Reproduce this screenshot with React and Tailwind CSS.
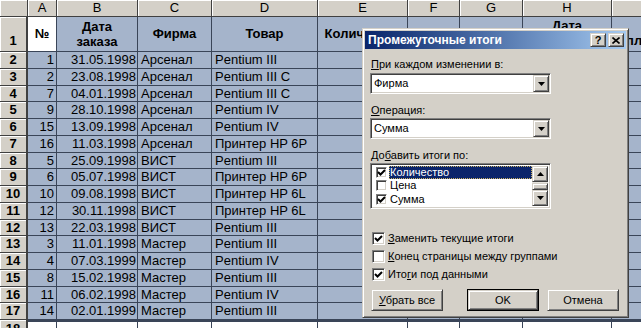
import React from 'react';

const rows = [
  [1, '31.05.1998', 'Арсенал', 'Pentium III'],
  [2, '23.08.1998', 'Арсенал', 'Pentium III C'],
  [7, '04.01.1998', 'Арсенал', 'Pentium III C'],
  [9, '28.10.1998', 'Арсенал', 'Pentium IV'],
  [15, '13.09.1998', 'Арсенал', 'Pentium IV'],
  [16, '11.03.1998', 'Арсенал', 'Принтер HP 6P'],
  [5, '25.09.1998', 'ВИСТ', 'Pentium III'],
  [6, '05.07.1998', 'ВИСТ', 'Принтер HP 6P'],
  [10, '09.08.1998', 'ВИСТ', 'Принтер HP 6L'],
  [12, '30.11.1998', 'ВИСТ', 'Принтер HP 6L'],
  [13, '22.03.1998', 'ВИСТ', 'Pentium III'],
  [3, '11.01.1998', 'Мастер', 'Pentium III'],
  [4, '07.03.1999', 'Мастер', 'Pentium IV'],
  [8, '15.02.1998', 'Мастер', 'Pentium III'],
  [11, '06.02.1998', 'Мастер', 'Pentium IV'],
  [14, '02.01.1999', 'Мастер', 'Pentium III'],
];

const letters = ['A', 'B', 'C', 'D', 'E', 'F', 'G', 'H', 'I'];

const head = 'bg-[#d4d0c8] border-r border-b border-[#404040] shadow-[inset_1px_1px_0_#fff] flex items-center justify-center';
const rowHead = 'bg-[#d4d0c8] border-r-2 border-b border-[#404040] shadow-[inset_1px_1px_0_#fff] flex items-center justify-center font-bold';
const cell = 'bg-[#a5b4cb] border-r border-b border-[#3a4558] flex items-center whitespace-nowrap overflow-hidden';
const blank = 'bg-white border-r border-b border-[#3a4558]';

const raised = 'bg-[#d4d0c8] border border-t-[#d4d0c8] border-l-[#d4d0c8] border-r-[#404040] border-b-[#404040] shadow-[inset_1px_1px_0_#fff,inset_-1px_-1px_0_#808080]';
const sunken = 'border border-t-[#808080] border-l-[#808080] border-r-white border-b-white shadow-[inset_1px_1px_0_#404040,inset_-1px_-1px_0_#d4d0c8]';

const Check = () => (
  <svg width="9" height="9" viewBox="0 0 9 9">
    <path d="M1 4 L3.5 6.5 L8 2" stroke="#000" strokeWidth="2" fill="none" />
  </svg>
);

const Box = ({ checked, size = 'w-[13px] h-[13px]' }) => (
  <span className={`${size} ${sunken} bg-white flex items-center justify-center shrink-0`}>
    {checked && <Check />}
  </span>
);

const Arrow = ({ up }) => (
  <svg width="7" height="4" viewBox="0 0 7 4">
    <path d={up ? 'M0 4 L3.5 0 L7 4 Z' : 'M0 0 L7 0 L3.5 4 Z'} fill="#000" />
  </svg>
);

const Combo = ({ value }) => (
  <div className={`w-[181px] h-[21px] bg-white ${sunken} flex items-center pl-[3px] pr-[1px]`}>
    <span className="flex-1">{value}</span>
    <span className={`w-[16px] h-[17px] ${raised} flex items-center justify-center`}>
      <Arrow />
    </span>
  </div>
);

const CheckRow = ({ checked, children }) => (
  <div className="h-[18px] flex items-center gap-[3px] pl-[2px]">
    <Box checked={checked} />
    <span>{children}</span>
  </div>
);

const Dialog = () => (
  <div className={`absolute left-[362px] top-[28px] w-[267px] h-[290px] ${raised} p-[2px] font-['Liberation_Sans',sans-serif] text-[11px] leading-[13px] text-black`}>
    <div className="h-[18px] flex items-center justify-between pl-[3px] pr-[2px] bg-linear-to-r from-[#0a246a] to-[#a6caf0]">
      <span className="text-white font-bold text-[12px]">Промежуточные итоги</span>
      <div className="flex gap-[2px]">
        <span className={`w-[16px] h-[14px] ${raised} flex items-center justify-center font-bold text-[11px]`}>?</span>
        <span className={`w-[16px] h-[14px] ${raised} flex items-center justify-center`}>
          <svg width="8" height="7" viewBox="0 0 8 7">
            <path d="M0.5 0.5 L7.5 6.5 M7.5 0.5 L0.5 6.5" stroke="#000" strokeWidth="1.6" />
          </svg>
        </span>
      </div>
    </div>

    <div className="px-[5px]">
      <div className="mt-[9px] pl-[1px]"><u>П</u>ри каждом изменении в:</div>
      <div className="mt-[2px]"><Combo value="Фирма" /></div>

      <div className="mt-[10px] pl-[1px]"><u>О</u>перация:</div>
      <div className="mt-[1px]"><Combo value="Сумма" /></div>

      <div className="mt-[10px] pl-[1px]">До<u>б</u>авить итоги по:</div>
      <div className={`mt-[1px] w-[181px] h-[46px] bg-white ${sunken} p-[2px] flex`}>
        <div className="flex-1 flex flex-col">
          <div className="h-[14px] flex items-center">
            <span className="w-[16px] flex justify-center"><Box checked size="w-[11px] h-[11px]" /></span>
            <span className="flex-1 h-full bg-[#0a246a] text-white pl-[1px] flex items-center outline outline-dotted outline-[#c8b060] -outline-offset-1">Количество</span>
          </div>
          <div className="h-[14px] flex items-center">
            <span className="w-[16px] flex justify-center"><Box size="w-[11px] h-[11px]" /></span>
            <span className="pl-[1px]">Цена</span>
          </div>
          <div className="h-[14px] flex items-center">
            <span className="w-[16px] flex justify-center"><Box checked size="w-[11px] h-[11px]" /></span>
            <span className="pl-[1px]">Сумма</span>
          </div>
        </div>
        <div className="w-[16px] flex flex-col bg-[#e6e4df]">
          <span className={`h-[16px] ${raised} flex items-center justify-center`}><Arrow up /></span>
          <span className={`mt-[1px] h-[8px] ${raised}`} />
          <span className="flex-1" />
          <span className={`h-[16px] ${raised} flex items-center justify-center`}><Arrow /></span>
        </div>
      </div>

      <div className="mt-[20px]">
        <CheckRow checked><u>З</u>аменить текущие итоги</CheckRow>
        <CheckRow><u>К</u>онец страницы между группами</CheckRow>
        <CheckRow checked>Ито<u>г</u>и под данными</CheckRow>
      </div>

      <div className="mt-[6px] flex">
        <span className={`ml-[1px] w-[72px] h-[22px] ${raised} flex items-center justify-center`}><span><u>У</u>брать все</span></span>
        <span className="ml-[24px] w-[72px] h-[22px] border border-black flex">
          <span className={`flex-1 ${raised} flex items-center justify-center`}>OK</span>
        </span>
        <span className={`ml-[8px] w-[72px] h-[22px] ${raised} flex items-center justify-center`}>Отмена</span>
      </div>
    </div>
  </div>
);

export default function App() {
  return (
    <div className="relative w-[641px] h-[328px] overflow-hidden bg-white font-['Liberation_Sans',Arial,sans-serif] text-[13px] leading-[16px] text-black">
      <div className="grid grid-cols-[28px_29px_81px_74px_106px_90px_52px_63px_89px_100px] grid-rows-[17px_35px_17px_17px_16px_17px_17px_17px_16px_17px_17px_17px_16px_17px_17px_17px_16px_17px_20px] w-[712px]">
        <div className={head} />
        {letters.map((l) => (
          <div key={l} className={head}>{l}</div>
        ))}

        <div className={`${rowHead} items-end pb-[2px]`}>1</div>
        <div className="bg-white border-r border-b border-[#3a4558] flex items-center justify-center font-bold">№</div>
        <div className={`${cell} justify-center text-center font-bold leading-[15px]`}>Дата<br />заказа</div>
        <div className={`${cell} justify-center font-bold`}>Фирма</div>
        <div className={`${cell} justify-center font-bold`}>Товар</div>
        <div className={`${cell} justify-center font-bold`}>Количество</div>
        <div className={cell} />
        <div className={cell} />
        <div className={`${cell} flex-col justify-start pt-[1px] font-bold leading-[15px]`}><span>Дата</span></div>
        <div className={`${cell} items-end pb-[2px] pl-[4px] font-bold`}>Оплата</div>

        {rows.map((r, i) => (
          <React.Fragment key={i}>
            <div className={rowHead}>{i + 2}</div>
            <div className={`${cell} justify-end pr-[2px]`}>{r[0]}</div>
            <div className={`${cell} justify-end pr-[1px]`}>{r[1]}</div>
            <div className={`${cell} pl-[3px]`}>{r[2]}</div>
            <div className={`${cell} pl-[3px]`}>{r[3]}</div>
            <div className={cell} />
            <div className={cell} />
            <div className={cell} />
            <div className={cell} />
            <div className={cell} />
          </React.Fragment>
        ))}

        <div className={`${rowHead} items-start pt-[1px]`}>18</div>
        {letters.map((l) => (
          <div key={l} className={`${blank} border-t-2 border-t-[#3a4558]`} />
        ))}
      </div>

      <Dialog />
    </div>
  );
}
